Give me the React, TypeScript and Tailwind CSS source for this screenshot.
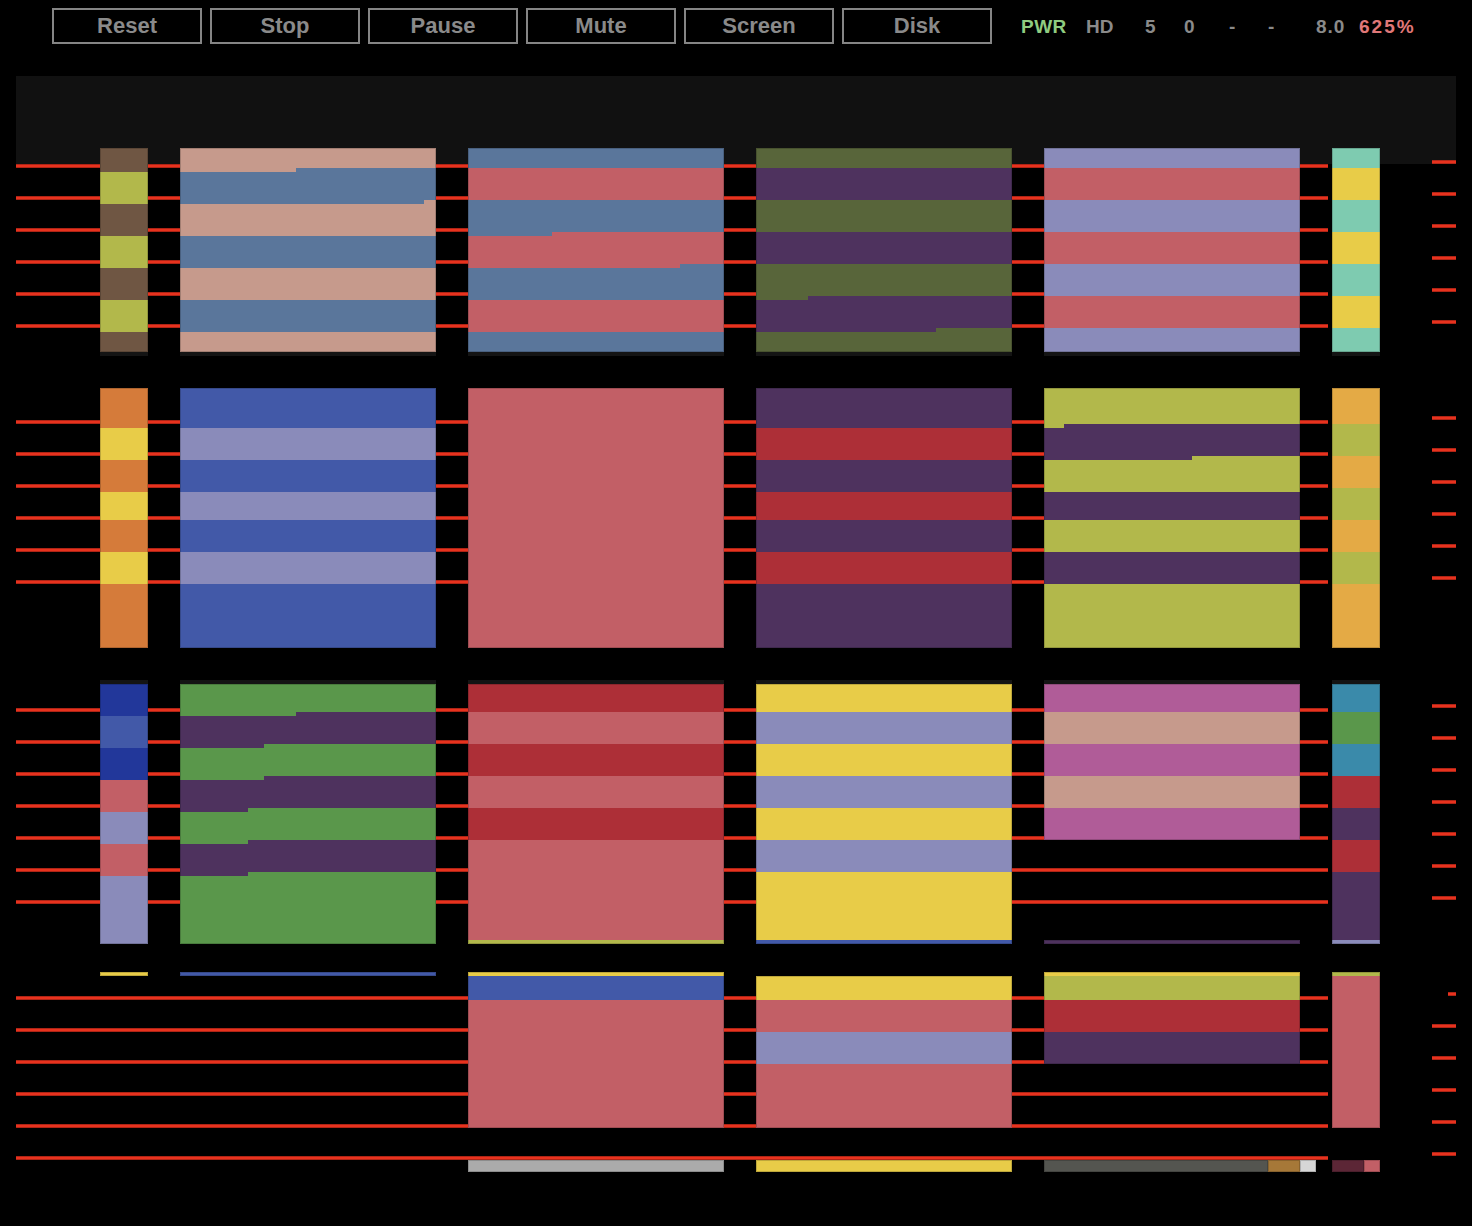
import React from 'react';

// palette sampled from the emulator screen
const C = {
  brown: '#6f5643',
  lime: '#b2b84b',
  pink: '#c69a8c',
  steel: '#5a769b',
  red: '#c25f66',
  olive: '#58653a',
  purple: '#4e325e',
  lav: '#8a8bba',
  teal: '#7ecbb0',
  yellow: '#e8cc48',
  orange: '#d57b3a',
  blue: '#4259a8',
  crimson: '#ad2f37',
  navy: '#22379a',
  green: '#5a974b',
  magenta: '#b05c98',
  cyan: '#3a8aaa',
  amber: '#e4aa45',
};

const LINE = '#e8321e';

// an edge is either a flat y, or [yLeft, stepX, yRight]
type Edge = number | [number, number, number];
type Block = { x: number; w: number; top: number; bottom: number; colors: string[]; edges?: Edge[] };

const minY = (e: Edge) => (typeof e === 'number' ? e : Math.min(e[0], e[2]));

const alt = (a: string, b: string, n: number) => Array.from({ length: n }, (_, i) => (i % 2 === 0 ? a : b));

const blocks: Block[] = [
  // row 1
  { x: 100, w: 48, top: 148, bottom: 352, colors: alt(C.brown, C.lime, 7), edges: [172, 204, 236, 268, 300, 332] },
  { x: 180, w: 256, top: 148, bottom: 352, colors: alt(C.pink, C.steel, 7), edges: [[172, 296, 168], [204, 424, 200], 236, 268, 300, 332] },
  { x: 468, w: 256, top: 148, bottom: 352, colors: alt(C.steel, C.red, 7), edges: [168, 200, [236, 552, 232], [268, 680, 264], 300, 332] },
  { x: 756, w: 256, top: 148, bottom: 352, colors: alt(C.olive, C.purple, 7), edges: [168, 200, 232, 264, [300, 808, 296], [332, 936, 328]] },
  { x: 1044, w: 256, top: 148, bottom: 352, colors: alt(C.lav, C.red, 7), edges: [168, 200, 232, 264, 296, 328] },
  { x: 1332, w: 48, top: 148, bottom: 352, colors: alt(C.teal, C.yellow, 7), edges: [168, 200, 232, 264, 296, 328] },
  // row 2
  { x: 100, w: 48, top: 388, bottom: 648, colors: alt(C.orange, C.yellow, 7), edges: [428, 460, 492, 520, 552, 584] },
  { x: 180, w: 256, top: 388, bottom: 648, colors: alt(C.blue, C.lav, 7), edges: [428, 460, 492, 520, 552, 584] },
  { x: 468, w: 256, top: 388, bottom: 648, colors: [C.red] },
  { x: 756, w: 256, top: 388, bottom: 648, colors: alt(C.purple, C.crimson, 7), edges: [428, 460, 492, 520, 552, 584] },
  { x: 1044, w: 256, top: 388, bottom: 648, colors: alt(C.lime, C.purple, 7), edges: [[428, 1064, 424], [460, 1192, 456], 492, 520, 552, 584] },
  { x: 1332, w: 48, top: 388, bottom: 648, colors: alt(C.amber, C.lime, 7), edges: [424, 456, 488, 520, 552, 584] },
  // row 3
  { x: 100, w: 48, top: 684, bottom: 944, colors: [C.navy, C.blue, C.navy, C.red, C.lav, C.red, C.lav], edges: [716, 748, 780, 812, 844, 876] },
  { x: 180, w: 256, top: 684, bottom: 944, colors: alt(C.green, C.purple, 7), edges: [[716, 296, 712], [748, 264, 744], [780, 264, 776], [812, 248, 808], [844, 248, 840], [876, 248, 872]] },
  { x: 468, w: 256, top: 684, bottom: 944, colors: [C.crimson, C.red, C.crimson, C.red, C.crimson, C.red, C.lime], edges: [712, 744, 776, 808, 840, 940] },
  { x: 756, w: 256, top: 684, bottom: 944, colors: [...alt(C.yellow, C.lav, 7), C.blue], edges: [712, 744, 776, 808, 840, 872, 940] },
  { x: 1044, w: 256, top: 684, bottom: 840, colors: alt(C.magenta, C.pink, 5), edges: [712, 744, 776, 808] },
  { x: 1044, w: 256, top: 940, bottom: 944, colors: [C.purple] },
  { x: 1332, w: 48, top: 684, bottom: 944, colors: [C.cyan, C.green, C.cyan, C.crimson, C.purple, C.crimson, C.purple, C.lav], edges: [712, 744, 776, 808, 840, 872, 940] },
  // row 4
  { x: 100, w: 48, top: 972, bottom: 976, colors: [C.yellow] },
  { x: 180, w: 256, top: 972, bottom: 976, colors: [C.blue] },
  { x: 468, w: 256, top: 972, bottom: 1128, colors: [C.yellow, C.blue, C.red], edges: [976, 1000] },
  { x: 756, w: 256, top: 976, bottom: 1128, colors: [C.yellow, C.red, C.lav, C.red], edges: [1000, 1032, 1064] },
  { x: 1044, w: 256, top: 972, bottom: 1064, colors: [C.yellow, C.lime, C.crimson, C.purple], edges: [976, 1000, 1032] },
  { x: 1332, w: 48, top: 972, bottom: 1128, colors: [C.lime, C.red], edges: [976] },
  // bottom status bars
  { x: 468, w: 256, top: 1160, bottom: 1172, colors: ['#ababab'] },
  { x: 756, w: 256, top: 1160, bottom: 1172, colors: [C.yellow] },
  { x: 1044, w: 224, top: 1160, bottom: 1172, colors: ['#545550'] },
  { x: 1268, w: 32, top: 1160, bottom: 1172, colors: ['#a67838'] },
  { x: 1300, w: 16, top: 1160, bottom: 1172, colors: ['#d6d6d6'] },
  { x: 1332, w: 32, top: 1160, bottom: 1172, colors: ['#5c2636'] },
  { x: 1364, w: 16, top: 1160, bottom: 1172, colors: [C.red] },
];

const range = (start: number, n: number) => Array.from({ length: n }, (_, i) => start + i * 32);

const lines = [...range(166, 6), ...range(422, 6), ...range(710, 7), ...range(998, 6)];
const dashes = [...range(162, 6), ...range(418, 6), ...range(706, 7), ...range(1026, 5)];
const cols = [100, 180, 468, 756, 1044, 1332];
const widths = [48, 256, 256, 256, 256, 48];

function Stripes({ b }: { b: Block }) {
  const edges = b.edges ?? [];
  return (
    <g shapeRendering="crispEdges">
      {b.colors.map((c, i) => {
        const y0 = i === 0 ? b.top : minY(edges[i - 1]);
        const y1 = i === b.colors.length - 1 ? b.bottom : minY(edges[i]);
        return <rect key={i} x={b.x} y={y0} width={b.w} height={y1 - y0} fill={c} />;
      })}
      {edges.map((e, i) => {
        if (typeof e === 'number') return null;
        const [yl, sx, yr] = e;
        return yl > yr ? (
          <rect key={'p' + i} x={b.x} y={yr} width={sx - b.x} height={yl - yr} fill={b.colors[i]} />
        ) : (
          <rect key={'p' + i} x={sx} y={yl} width={b.x + b.w - sx} height={yr - yl} fill={b.colors[i]} />
        );
      })}
      <rect x={b.x + 0.5} y={b.top + 0.5} width={b.w - 1} height={b.bottom - b.top - 1} fill="none" stroke="rgba(0,0,0,0.18)" />
    </g>
  );
}

const buttons = ['Reset', 'Stop', 'Pause', 'Mute', 'Screen', 'Disk'];

export default function App() {
  return (
    <div className="w-[1472px] h-[1226px] bg-black overflow-hidden" style={{ fontFamily: '"Liberation Sans", Arial, sans-serif' }}>
      <div className="flex items-center pt-[8px] pl-[52px] h-[44px]">
        <div className="flex gap-[8px]">
          {buttons.map((b) => (
            <button
              key={b}
              className="w-[150px] h-[36px] border-2 border-[#858585] bg-black text-[#8a8a8a] text-[22px] font-bold leading-none"
            >
              {b}
            </button>
          ))}
        </div>
        <div className="flex items-center ml-[29px] text-[19px] font-bold text-[#8a8a8a] leading-none">
          <span className="w-[65px] text-[#8fcc80] tracking-[0.5px]">PWR</span>
          <span className="w-[59px]">HD</span>
          <span className="w-[39px]">5</span>
          <span className="w-[45px]">0</span>
          <span className="w-[39px]">-</span>
          <span className="w-[48px]">-</span>
          <span className="w-[43px] tracking-[1px]">8.0</span>
          <span className="text-[#e07878] tracking-[2px]">625%</span>
        </div>
      </div>

      <svg className="block mt-[32px] ml-[16px]" width={1440} height={1150} viewBox="16 76 1440 1150">
        <rect x={16} y={76} width={1440} height={88} fill="#111111" shapeRendering="crispEdges" />
        {lines.map((y) => (
          <rect key={'l' + y} x={16} y={y - 1.75} width={1312} height={3.5} fill={LINE} />
        ))}
        {dashes.map((y) => (
          <rect key={'d' + y} x={1432} y={y - 1.75} width={24} height={3.5} fill={LINE} />
        ))}
        <rect x={1448} y={992.25} width={8} height={3.5} fill={LINE} />
        {cols.map((x, i) => (
          <g key={'s' + x} shapeRendering="crispEdges">
            <rect x={x} y={352} width={widths[i]} height={4} fill="#141414" />
            <rect x={x} y={680} width={widths[i]} height={4} fill="#141414" />
          </g>
        ))}
        {blocks.map((b, i) => (
          <Stripes key={i} b={b} />
        ))}
      </svg>
    </div>
  );
}
